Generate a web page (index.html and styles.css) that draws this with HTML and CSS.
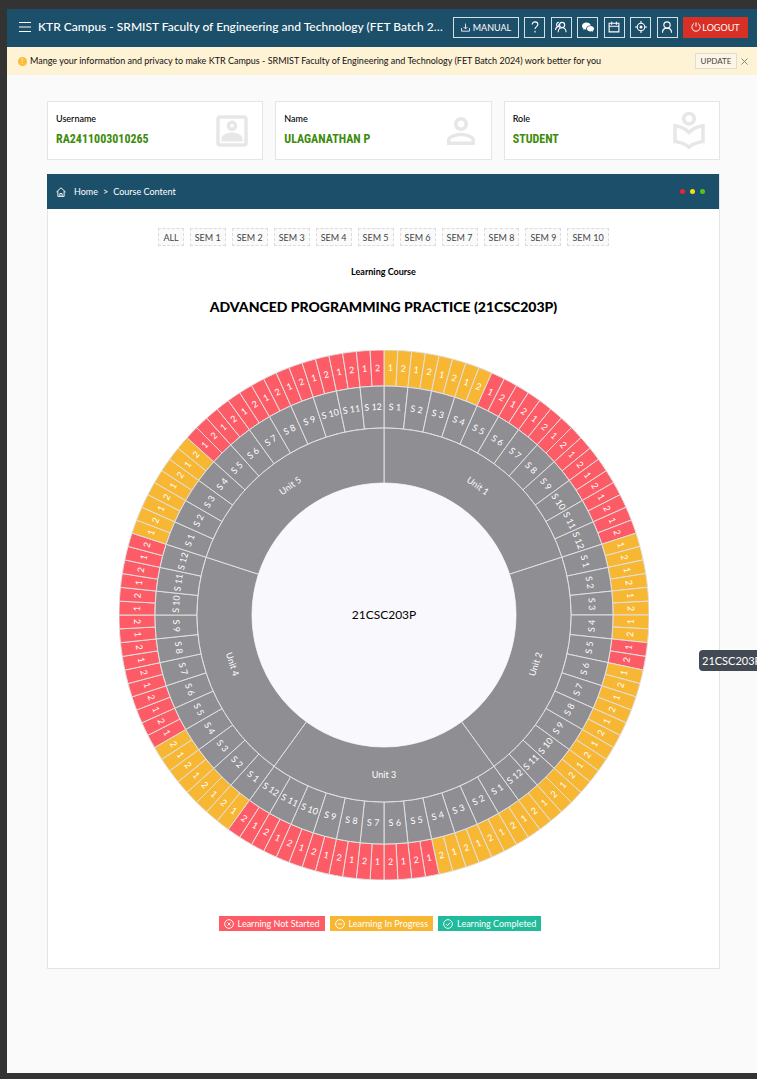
FILE: index.html
```html
<!DOCTYPE html>
<html lang="en">
<head>
<meta charset="utf-8">
<meta name="viewport" content="width=device-width, initial-scale=1">
<title>KTR Campus - Course Content</title>
<link rel="stylesheet" href="styles.css">
</head>
<body>
<div class="page">
  <header class="topbar">
    <button class="menu" type="button" aria-label="Menu"><svg viewBox="0 0 12 12" width="12" height="12"><path d="M0 1.500h12M0 6h12M0 10.500h12"/></svg></button>
    <h1 class="site-title">KTR Campus - SRMIST Faculty of Engineering and Technology (FET Batch 2024)</h1>
    <nav class="actions" aria-label="Tools">
      <button class="tool tool-wide" type="button"><svg viewBox="0 0 16 16" width="9" height="9"><path d="M8 1v9M4.500 7L8 10.500 11.500 7M1 9v5.500h14V9"/></svg>MANUAL</button>
      <button class="tool" type="button" aria-label="Help"><svg viewBox="0 0 16 16" width="12" height="12"><path d="M4.300 4.800C4.300 2.500 5.800 1.200 8 1.200s3.800 1.400 3.800 3.400C11.800 7.300 8 7.600 8 10.800M8 13v2.200"/></svg></button>
      <button class="tool" type="button" aria-label="Users"><svg viewBox="0 0 16 16" width="12" height="12"><circle cx="9.500" cy="5.200" r="3.400"/><path d="M4.200 15c0-3.500 2.300-6.200 5.300-6.200s5.300 2.700 5.300 6.200M5 1.800C2.800 2 2 3.600 2.200 5.200c.1 1 .6 1.800 1.400 2.300C1.800 8.300.8 10 .7 12M5.500 4.500c-1 1.500-.3 3.500 1 4.200"/></svg></button>
      <button class="tool" type="button" aria-label="Messages"><svg class="solid" viewBox="0 0 16 16" width="12" height="12"><path d="M6 2C2.700 2 0 4 0 6.600c0 1.500.9 2.800 2.200 3.600L1.700 12l2-1.100c.6.200 1.300.3 2 .3C5.300 8 7.900 6 11.800 6 11.300 3.700 8.900 2 6 2z"/><path d="M16 10.300C16 8.200 13.900 6.700 11.300 6.700S6.600 8.200 6.600 10.300s2.100 3.700 4.700 3.700c.6 0 1.100-.1 1.600-.2l1.700.9-.5-1.500c1.200-.7 1.900-1.700 1.900-2.900z"/></svg></button>
      <button class="tool" type="button" aria-label="Calendar"><svg viewBox="0 0 16 16" width="12" height="12"><path d="M1.500 3h13v11.500h-13zM1.500 7h13M4.800 1v4M11.200 1v4"/></svg></button>
      <button class="tool" type="button" aria-label="Locate"><svg viewBox="0 0 16 16" width="12" height="12"><circle cx="8" cy="8" r="5"/><circle class="dot" cx="8" cy="8" r="2"/><path d="M8 0v3M8 13v3M0 8h3M13 8h3"/></svg></button>
      <button class="tool" type="button" aria-label="Profile"><svg viewBox="0 0 16 16" width="12" height="12"><circle cx="8" cy="5.300" r="4.200"/><path d="M2 15.500c0-3.600 2.600-6 6-6s6 2.400 6 6"/></svg></button>
      <button class="tool tool-wide logout" type="button"><svg viewBox="0 0 16 16" width="10" height="10"><path d="M5 2.300a6.600 6.600 0 1 0 6 0M8 .5v7"/></svg>LOGOUT</button>
    </nav>
  </header>
  <div class="notice">
    <span class="notice-mark">!</span>
    <p class="notice-text">Mange your information and privacy to make KTR Campus - SRMIST Faculty of Engineering and Technology (FET Batch 2024) work better for you</p>
    <button class="update" type="button">UPDATE</button>
    <button class="close" type="button" aria-label="Close"><svg viewBox="0 0 8 8" width="7" height="7"><path d="M.5.5l7 7M7.500.5l-7 7"/></svg></button>
  </div>
  <main class="content">
    <section class="cards">
      <article class="card">
        <div><h2 class="card-label">Username</h2><p class="card-value">RA2411003010265</p></div>
        <svg viewBox="0 0 24 24" width="42" height="42"><path d="M19 5v14H5V5h14m0-2H5c-1.100 0-2 .9-2 2v14c0 1.100.9 2 2 2h14c1.100 0 2-.9 2-2V5c0-1.100-.9-2-2-2zm-7 9c-1.650 0-3-1.350-3-3s1.350-3 3-3 3 1.350 3 3-1.350 3-3 3zm0-4c-.55 0-1 .45-1 1s.45 1 1 1 1-.45 1-1-.45-1-1-1zm6 10H6v-1.530c0-2.500 3.970-3.580 6-3.580s6 1.080 6 3.580V18z"/></svg>
      </article>
      <article class="card">
        <div><h2 class="card-label">Name</h2><p class="card-value">ULAGANATHAN P</p></div>
        <svg viewBox="0 0 24 24" width="42" height="42"><path d="M12 6c1.100 0 2 .9 2 2s-.9 2-2 2-2-.9-2-2 .9-2 2-2m0 9c2.700 0 5.800 1.290 6 2v1H6v-.99c.2-.72 3.300-2.010 6-2.010m0-11C9.790 4 8 5.790 8 8s1.790 4 4 4 4-1.790 4-4-1.790-4-4-4zm0 9c-2.670 0-8 1.340-8 4v3h16v-3c0-2.660-5.330-4-8-4z"/></svg>
      </article>
      <article class="card">
        <div><h2 class="card-label">Role</h2><p class="card-value">STUDENT</p></div>
        <svg viewBox="0 0 24 24" width="42" height="42"><path d="M12 9c2.210 0 4-1.790 4-4s-1.790-4-4-4-4 1.790-4 4 1.790 4 4 4zm0-6c1.100 0 2 .9 2 2s-.9 2-2 2-2-.9-2-2 .9-2 2-2zm0 8.550C9.640 9.350 6.480 8 3 8v11c3.480 0 6.640 1.350 9 3.550 2.360-2.190 5.520-3.550 9-3.550V8c-3.480 0-6.640 1.350-9 3.550zm7 5.580c-2.530.34-4.930 1.300-7 2.820-2.060-1.520-4.470-2.490-7-2.830v-6.950c2.100.38 4.050 1.350 5.640 2.830L12 14.280l1.360-1.270c1.590-1.480 3.540-2.450 5.640-2.830v6.950z"/></svg>
      </article>
    </section>
    <section class="panel">
      <nav class="crumbs" aria-label="Breadcrumb">
        <svg viewBox="0 0 16 16" width="10" height="10"><path d="M.7 8L8 1.300 15.300 8M3 6.500v8.500h10V6.500M6.200 15V10.500h3.600V15"/></svg>
        <a href="#">Home</a><span>&gt;</span><a href="#">Course Content</a>
        <span class="lights"><i class="red"></i><i class="yellow"></i><i class="green"></i></span>
      </nav>
      <div class="sems">
        <button type="button">ALL</button><button type="button">SEM 1</button><button type="button">SEM 2</button><button type="button">SEM 3</button><button type="button">SEM 4</button><button type="button">SEM 5</button><button type="button">SEM 6</button><button type="button">SEM 7</button><button type="button">SEM 8</button><button type="button">SEM 9</button><button type="button">SEM 10</button>
      </div>
      <p class="kicker">Learning Course</p>
      <h2 class="course">ADVANCED PROGRAMMING PRACTICE (21CSC203P)</h2>
      <svg class="chart" id="chart" viewBox="-265 -265 530 530" role="img" aria-label="Course progress"></svg>
      <ul class="legend">
        <li class="not-started"><svg viewBox="0 0 16 16" width="10" height="10"><circle cx="8" cy="8" r="7"/><path d="M5.500 5.500l5 5M10.500 5.500l-5 5"/></svg>Learning Not Started</li>
        <li class="in-progress"><svg viewBox="0 0 16 16" width="10" height="10"><circle cx="8" cy="8" r="7"/><path d="M4.500 8h7"/></svg>Learning In Progress</li>
        <li class="completed"><svg viewBox="0 0 16 16" width="10" height="10"><circle cx="8" cy="8" r="7"/><path d="M4.800 8.200l2.400 2.400 4-4.800"/></svg>Learning Completed</li>
      </ul>
    </section>
  </main>
  <div class="tooltip">21CSC203P</div>
</div>
<script src="chart.js"></script>
</body>
</html>
```
FILE: styles.css
```css
* { box-sizing: border-box; }
html { background: #333333; }
body {
  margin: 0;
  padding: 9px 0 6px 7px;
  min-height: 100vh;
  display: flex;
  font-family: Lato, "Liberation Sans", sans-serif;
  font-size: 9px;
  color: #000;
  background: #333333;
}
h1, h2, p, ul { margin: 0; padding: 0; }
button { font: inherit; margin: 0; cursor: pointer; }
svg { flex: none; }
.page {
  position: relative;
  flex: 1;
  min-width: 0;
  overflow: hidden;
  background: #fafafa;
}
.topbar {
  display: flex;
  align-items: center;
  height: 38px;
  padding: 0 9px 2px 12px;
  background: #1c4f69;
  color: #fff;
}
.topbar svg { fill: none; stroke: #fff; stroke-width: 1.5; }
.topbar .menu svg { stroke-width: 1; }
.topbar .solid { fill: #fff; stroke: none; }
.topbar .dot { fill: #fff; stroke: none; }
.menu { display: flex; padding: 0; border: 0; background: none; }
.site-title {
  flex: 1;
  min-width: 0;
  margin: 0 4px 0 7px;
  overflow: hidden;
  white-space: nowrap;
  text-overflow: ellipsis;
  font-size: 12px;
  line-height: 20px;
  font-weight: 500;
}
.actions { display: flex; align-items: center; justify-content: space-between; width: 295px; }
.tool {
  display: flex;
  align-items: center;
  justify-content: center;
  gap: 3px;
  width: 21px;
  height: 21px;
  padding: 0;
  border: 1px solid #d5e0e6;
  background: none;
  color: #fff;
  white-space: nowrap;
}
.tool-wide { width: 66px; }
.logout { width: 65px; gap: 1px; border-color: #d93025; background: #d93025; }
.notice {
  display: flex;
  align-items: center;
  height: 28px;
  padding: 0 9px 0 11px;
  background: #fff3d6;
}
.notice-mark {
  width: 9px;
  height: 9px;
  border-radius: 50%;
  background: #fbbc3a;
  color: #fff3d6;
  font-size: 7px;
  line-height: 9px;
  text-align: center;
}
.notice-text { flex: 1; min-width: 0; margin-left: 3px; line-height: 14px; white-space: nowrap; color: #111; }
.update { width: 42px; height: 16px; padding: 0; border: 1px solid #ddd; background: #fdf6e4; font-size: 8px; color: #444; }
.close { display: flex; margin-left: 4px; padding: 0; border: 0; background: none; }
.close svg { fill: none; stroke: #777; }
.content { padding: 26px 37px 104px 40px; }
.cards { display: grid; grid-template-columns: repeat(3, 1fr); gap: 12px; }
.card {
  display: flex;
  align-items: center;
  justify-content: space-between;
  height: 59px;
  padding: 0 9px 0 8px;
  border: 1px solid #e5e5e5;
  background: #fff;
}
.card svg { fill: #e7e7e7; }
.card-label { font-size: 9px; line-height: 12px; font-weight: 500; margin-bottom: 5px; }
.card-value {
  font-family: "Liberation Sans Narrow", "Roboto Condensed", "Liberation Sans", sans-serif;
  font-size: 12px;
  line-height: 18px;
  font-weight: 700;
  color: #3d8b0b;
}
.panel { margin-top: 14px; padding-bottom: 37px; border: 1px solid #e5e5e5; border-top: 0; background: #fff; }
.crumbs {
  display: flex;
  align-items: center;
  height: 35px;
  margin-left: -1px;
  padding: 0 14px 0 9px;
  background: #1c4f69;
  color: #fff;
}
.crumbs svg { fill: none; stroke: #fff; stroke-width: 1.5; margin-right: 8px; }
.crumbs a { color: #fff; text-decoration: none; }
.crumbs span { margin: 0 5px; }
.crumbs .lights { display: flex; gap: 5px; margin: 0 0 0 auto; }
.lights i { width: 5px; height: 5px; border-radius: 50%; }
.red { background: #f5222d; }
.yellow { background: #fadb14; }
.green { background: #52c41a; }
.sems { display: flex; flex-wrap: wrap; justify-content: center; gap: 6px; margin-top: 19px; }
.sems button {
  height: 18px;
  padding: 0 4px;
  border: 1px dashed #dcdcdc;
  background: #fafafa;
  color: #444;
}
.kicker { margin-top: 19px; text-align: center; line-height: 14px; font-weight: 700; }
.course { margin-top: 17px; text-align: center; font-size: 14px; line-height: 22px; font-weight: 900; }
.chart { display: block; width: 530px; max-width: 100%; margin: 32px auto 0; }
.slice { stroke: #e0e0e2; stroke-width: 1; }
.base { fill: #8f8e93; }
.slice.not-started { fill: #fd5c66; }
.slice.in-progress { fill: #f7b733; }
.hub { fill: #f9f9fd; }
.label { fill: #fff; font-size: 9px; text-anchor: middle; }
.hub-label { fill: #000; font-size: 12px; text-anchor: middle; }
.legend { display: flex; flex-wrap: wrap; justify-content: center; gap: 5px; margin-top: 36px; padding-right: 7px; list-style: none; }
.legend li { display: flex; align-items: center; gap: 4px; height: 15px; padding: 0 5px; color: #fff; }
.legend svg { fill: none; stroke: #fff; stroke-width: 1.5; }
.legend .not-started { background: #fd5c66; }
.legend .in-progress { background: #f7b733; }
.legend .completed { background: #20bb9b; }
.tooltip {
  position: absolute;
  top: 641px;
  left: calc(100% - 58px);
  padding: 0 3px;
  border-radius: 4px;
  background: #434a54;
  color: #fff;
  font-size: 11px;
  line-height: 21px;
}
```
FILE: chart.js
```javascript
const UNITS = 5;
const SESSIONS = 12;
const TOPICS = 2;
const RADII = [132, 187, 229, 265];

// Runs of topic statuses, clockwise from the top: [status, count].
const STATUS_RUNS = [
  ["in-progress", 8], ["not-started", 16],
  ["in-progress", 8], ["not-started", 2], ["in-progress", 14],
  ["in-progress", 8], ["not-started", 16],
  ["in-progress", 8], ["not-started", 16],
  ["in-progress", 8], ["not-started", 16]
];

const chart = document.getElementById("chart");

function add(name, attrs, text) {
  const node = document.createElementNS("http://www.w3.org/2000/svg", name);
  for (const key in attrs) node.setAttribute(key, attrs[key]);
  if (text) node.textContent = text;
  chart.appendChild(node);
}

function point(radius, degrees) {
  const a = degrees * Math.PI / 180;
  return (radius * Math.sin(a)).toFixed(2) + " " + (-radius * Math.cos(a)).toFixed(2);
}

function slice(ring, start, end, status, text) {
  const r0 = RADII[ring], r1 = RADII[ring + 1];
  add("path", {
    class: "slice " + status,
    d: `M${point(r0, start)}L${point(r1, start)}A${r1} ${r1} 0 0 1 ${point(r1, end)}L${point(r0, end)}A${r0} ${r0} 0 0 0 ${point(r0, start)}Z`
  });
  const mid = (start + end) / 2;
  const turn = mid > 90 && mid < 270 ? mid - 180 : mid;
  const [x, y] = point((r0 + r1) / 2, mid).split(" ");
  add("text", { class: "label", transform: `translate(${x} ${y}) rotate(${turn})`, dy: "3" }, text);
}

const unitSpan = 360 / UNITS;
const sessionSpan = unitSpan / SESSIONS;
const topicSpan = sessionSpan / TOPICS;

const statuses = STATUS_RUNS.flatMap(([status, count]) => Array(count).fill(status));
statuses.forEach((status, i) => {
  slice(2, i * topicSpan, (i + 1) * topicSpan, status, String(i % TOPICS + 1));
});
for (let i = 0; i < UNITS * SESSIONS; i++) {
  slice(1, i * sessionSpan, (i + 1) * sessionSpan, "base", "S " + (i % SESSIONS + 1));
}
for (let i = 0; i < UNITS; i++) {
  slice(0, i * unitSpan, (i + 1) * unitSpan, "base", "Unit " + (i + 1));
}
add("circle", { class: "hub", r: RADII[0] });
add("text", { class: "hub-label", y: 4 }, "21CSC203P");
```
